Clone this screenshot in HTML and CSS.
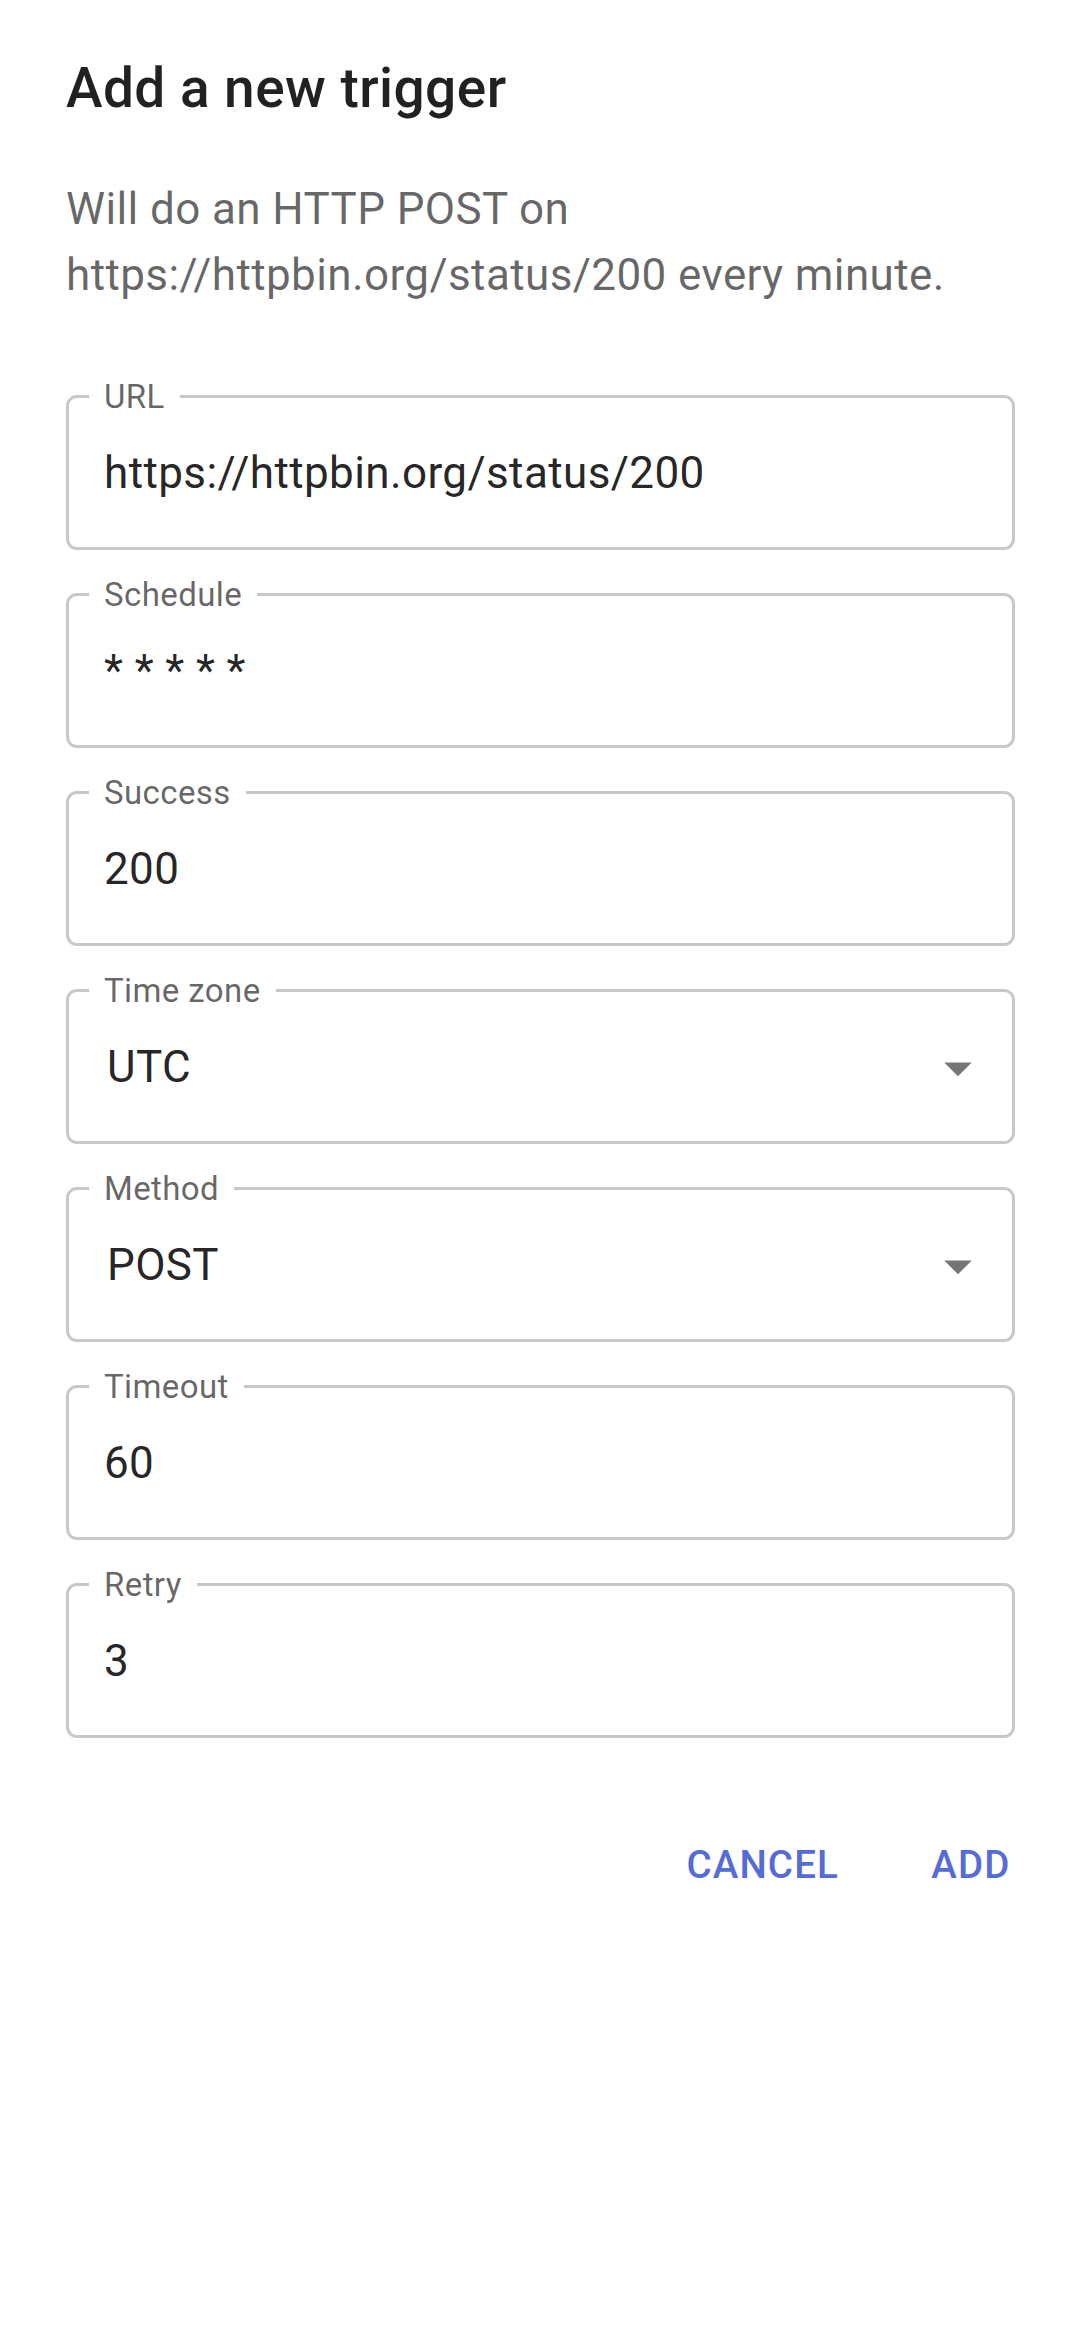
FILE: index.html
```html
<!DOCTYPE html>
<html lang="en">
<head>
<meta charset="utf-8">
<title>Add a new trigger</title>
<link rel="stylesheet" href="styles.css">
</head>
<body>
<div class="dialog">
  <h2 class="dialog-title">Add a new trigger</h2>
  <div class="dialog-content">
    <p class="dialog-text">Will do an HTTP POST on https://httpbin.org/status/200 every minute.</p>
    <form class="fields">
      <fieldset class="field">
        <legend class="field-label">URL</legend>
        <input class="field-input" type="text" value="https://httpbin.org/status/200">
      </fieldset>
      <fieldset class="field">
        <legend class="field-label">Schedule</legend>
        <input class="field-input" type="text" value="* * * * *">
      </fieldset>
      <fieldset class="field">
        <legend class="field-label">Success</legend>
        <input class="field-input" type="text" value="200">
      </fieldset>
      <fieldset class="field">
        <legend class="field-label">Time zone</legend>
        <div class="field-select">
          <span class="select-value">UTC</span>
          <svg class="select-icon" viewBox="0 0 24 24" aria-hidden="true"><path d="M7 10l5 5 5-5z"/></svg>
        </div>
      </fieldset>
      <fieldset class="field">
        <legend class="field-label">Method</legend>
        <div class="field-select">
          <span class="select-value">POST</span>
          <svg class="select-icon" viewBox="0 0 24 24" aria-hidden="true"><path d="M7 10l5 5 5-5z"/></svg>
        </div>
      </fieldset>
      <fieldset class="field">
        <legend class="field-label">Timeout</legend>
        <input class="field-input" type="text" value="60">
      </fieldset>
      <fieldset class="field">
        <legend class="field-label">Retry</legend>
        <input class="field-input" type="text" value="3">
      </fieldset>
    </form>
  </div>
  <div class="dialog-actions">
    <button class="btn" type="button">Cancel</button>
    <button class="btn" type="button">Add</button>
  </div>
</div>
</body>
</html>
```

FILE: styles.css
```css
* {
  box-sizing: border-box;
}

html, body {
  margin: 0;
  padding: 0;
  background: #ffffff;
}

body {
  font-family: Roboto, "Noto Sans", "Liberation Sans", sans-serif;
  color: rgba(0, 0, 0, 0.87);
}

.dialog {
  width: 1081px;
  min-height: 2340px;
  background: #ffffff;
}

.dialog-title {
  margin: 0;
  padding: 44px 66px;
  font-size: 55px;
  line-height: 88px;
  font-weight: 500;
  letter-spacing: 0.008em;
  color: rgba(0, 0, 0, 0.87);
}

.dialog-content {
  padding: 0 66px;
}

.dialog-text {
  margin: 0;
  font-size: 44px;
  line-height: 66px;
  font-weight: 400;
  letter-spacing: 0.009em;
  color: rgba(0, 0, 0, 0.6);
}

.fields {
  display: flex;
  flex-direction: column;
  gap: 28px;
  margin: 72px 0 0 0;
}

.field {
  margin: 0;
  min-width: 0;
  height: 170px;
  padding: 29px 0 0 20px;
  border: 3px solid #c8c8c8;
  border-radius: 11px;
}

.field-label {
  padding: 0 15px;
  font-size: 33px;
  line-height: 33px;
  font-weight: 400;
  letter-spacing: 0.012em;
  color: rgba(0, 0, 0, 0.6);
}

.field-input {
  display: block;
  width: 100%;
  height: 63px;
  margin: 0;
  padding: 0 15px;
  border: 0;
  outline: none;
  background: transparent;
  font-family: inherit;
  font-size: 44px;
  line-height: 63px;
  letter-spacing: 0.009em;
  color: rgba(0, 0, 0, 0.87);
}

.field-select {
  display: flex;
  align-items: center;
  height: 63px;
  padding-left: 18px;
  padding-right: 21px;
}

.select-value {
  flex: 1;
  font-size: 44px;
  line-height: 63px;
  letter-spacing: 0.009em;
  color: rgba(0, 0, 0, 0.87);
}

.select-icon {
  width: 66px;
  height: 66px;
  flex: none;
  fill: rgba(0, 0, 0, 0.54);
}

.dialog-actions {
  display: flex;
  justify-content: flex-end;
  gap: 22px;
  padding: 22px;
  margin-top: 55px;
}

.btn {
  min-width: 176px;
  padding: 16px 22px;
  border: 0;
  border-radius: 11px;
  background: transparent;
  font-family: inherit;
  font-size: 38.5px;
  line-height: 67px;
  font-weight: 500;
  letter-spacing: 0.03em;
  text-transform: uppercase;
  color: #556cd6;
  cursor: pointer;
}
```
